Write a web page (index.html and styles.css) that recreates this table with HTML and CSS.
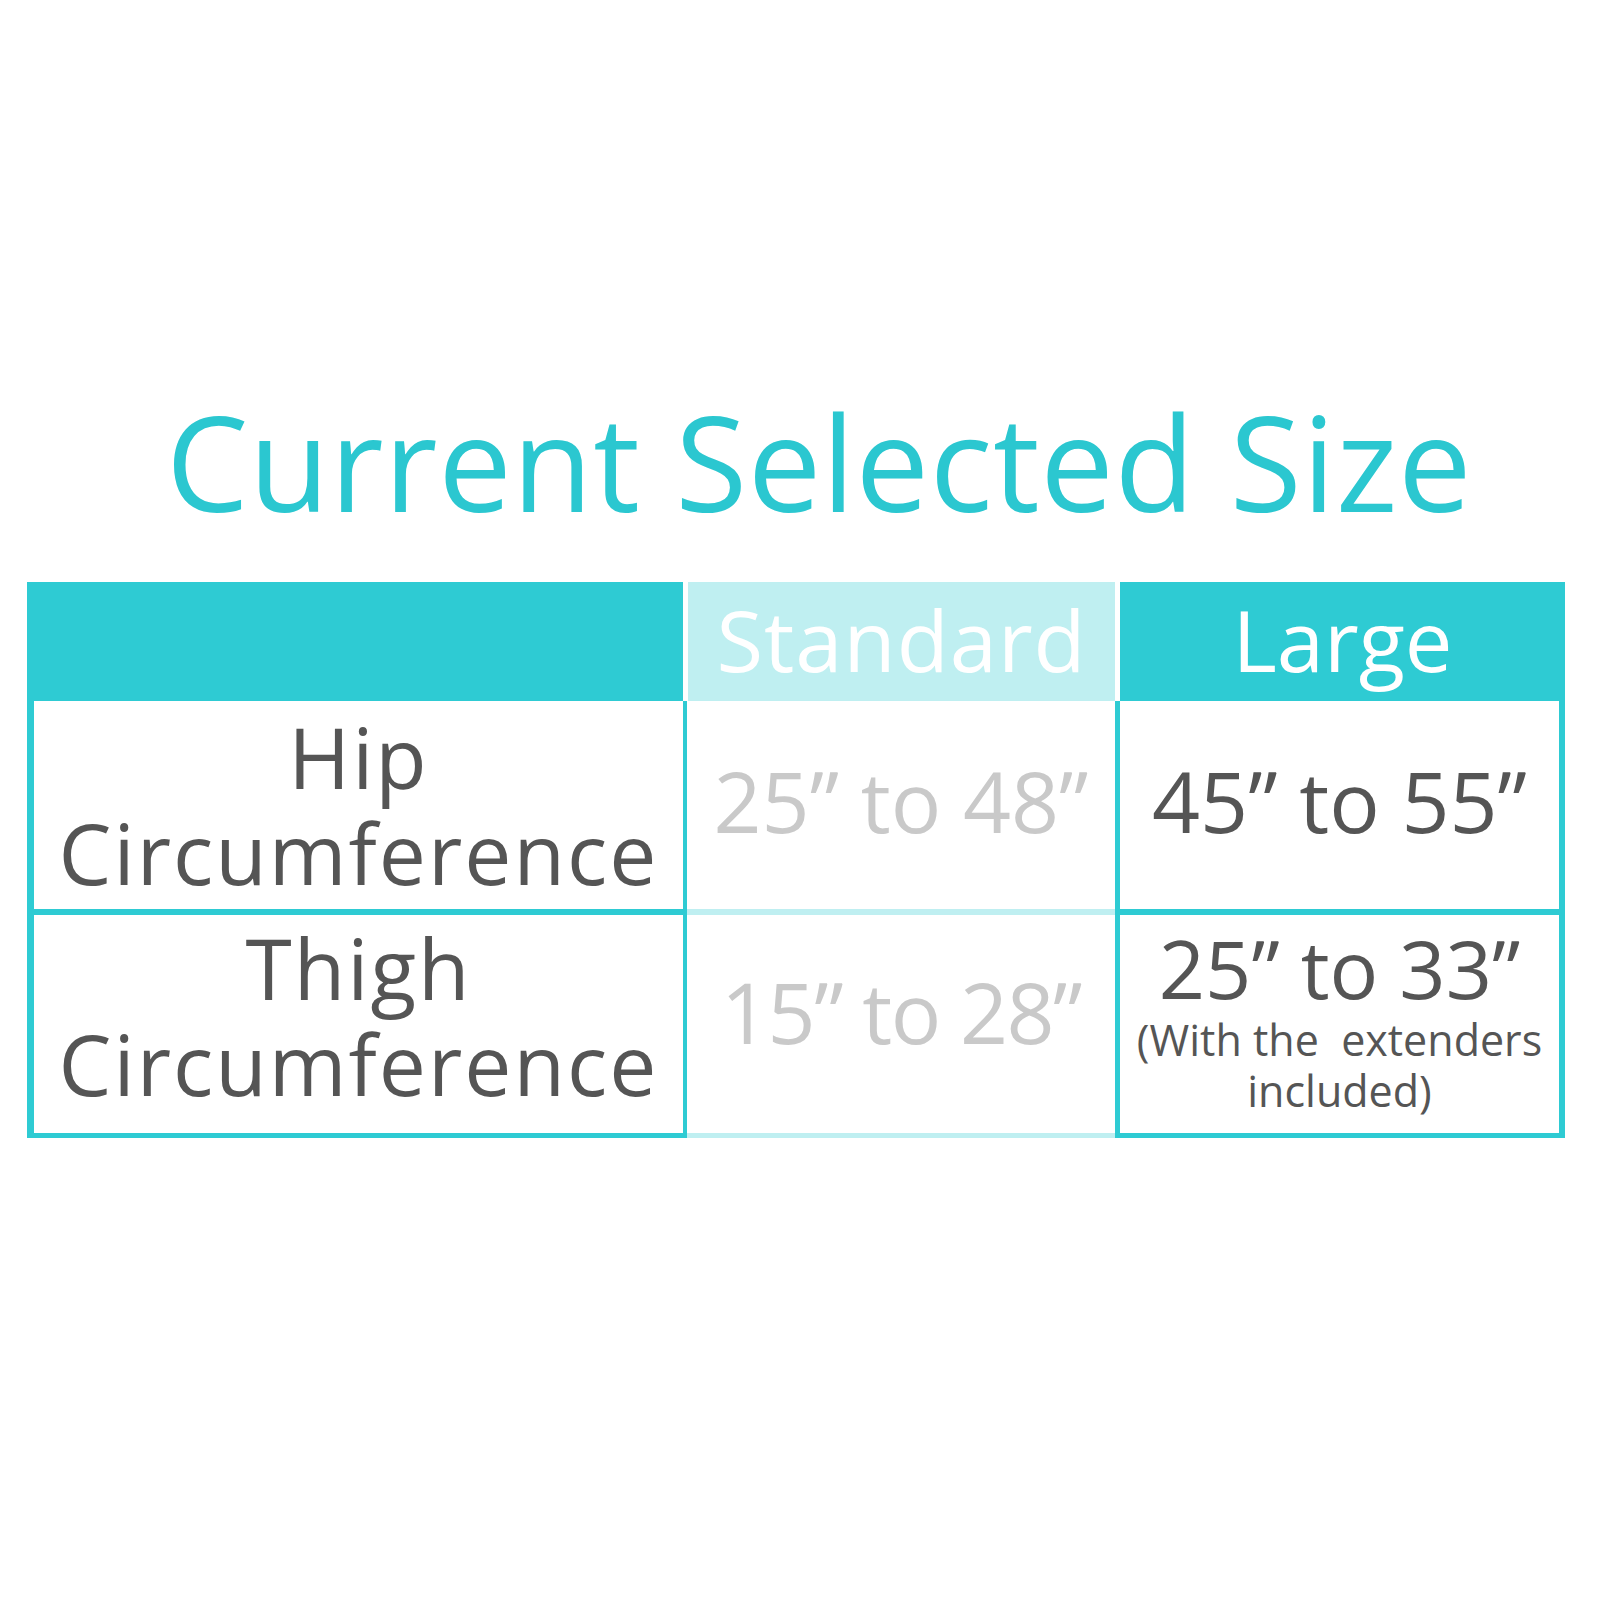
FILE: index.html
```html
<!DOCTYPE html>
<html lang="en">
<head>
<meta charset="utf-8">
<title>Current Selected Size</title>
<link rel="stylesheet" href="styles.css">
</head>
<body>
<div class="page">
  <h1 class="title">Current Selected Size</h1>
  <div class="chart">
    <div class="head head-blank"></div>
    <div class="head head-std">Standard</div>
    <div class="head head-lg">Large</div>

    <div class="cell label r1"><span>Hip</span><span>Circumference</span></div>
    <div class="cell std r1"><span class="val">25” to 48”</span></div>
    <div class="cell lg r1"><span class="val">45” to 55”</span></div>

    <div class="cell label r2 shift"><span>Thigh</span><span>Circumference</span></div>
    <div class="cell std r2 shift"><span class="val val-narrow">15” to 28”</span></div>
    <div class="cell lg r2 lift"><span class="val val-sm">25” to 33”</span><span class="note">(With the&nbsp; extenders</span><span class="note">included)</span></div>
  </div>
</div>
</body>
</html>
```

FILE: styles.css
```css
* { box-sizing: border-box; }

html, body {
  margin: 0;
  padding: 0;
  background: #ffffff;
}

body {
  font-family: "Open Sans", "Liberation Sans", sans-serif;
  width: 1600px;
  height: 1600px;
}

.page {
  padding-top: 395px;
}

.title {
  margin: 0 0 55px 0;
  padding-left: 38px;
  text-align: center;
  font-weight: 400;
  font-size: 131px;
  line-height: 132px;
  color: #2bc7d0;
  letter-spacing: 0.6px;
}

.chart {
  margin-left: 27px;
  width: 1538px;
  display: grid;
  grid-template-columns: 660px 428px 450px;
  grid-template-rows: 119px 214px 223px;
}

.head {
  display: flex;
  align-items: center;
  justify-content: center;
  color: #ffffff;
  font-size: 85px;
  line-height: 1;
  padding-bottom: 4px;
}

.head-blank {
  background: #2ecbd3;
  margin-right: 4px;
}

.head-std {
  background: #bfeff1;
  margin-left: 1px;
  letter-spacing: 1px;
}

.head-lg {
  background: #2ecbd3;
  margin-left: 5px;
}

.cell {
  display: flex;
  flex-direction: column;
  align-items: center;
  justify-content: center;
  color: #555555;
}

.label {
  border-style: solid;
  border-color: #2ecbd3;
  border-width: 0 4px 6px 7px;
  font-size: 84px;
  line-height: 96px;
  letter-spacing: 2px;
}

.std {
  border-bottom: 6px solid #bfeff1;
  color: #c9c9c9;
}

.lg {
  border-style: solid;
  border-color: #2ecbd3;
  border-width: 0 6px 6px 5px;
}

.r2.label { border-bottom-width: 5px; }
.r2.std { border-bottom-width: 5px; }
.r2.lg { border-bottom-width: 5px; }

.shift { padding-bottom: 16px; }
.lift { padding-bottom: 10px; }

.val {
  font-size: 84px;
  line-height: 100px;
  padding-bottom: 8px;
}

.val-narrow {
  letter-spacing: -1.5px;
}

.val-sm {
  font-size: 81px;
  line-height: 92px;
  padding-bottom: 0;
}

.note {
  font-size: 43px;
  line-height: 51px;
}
```
